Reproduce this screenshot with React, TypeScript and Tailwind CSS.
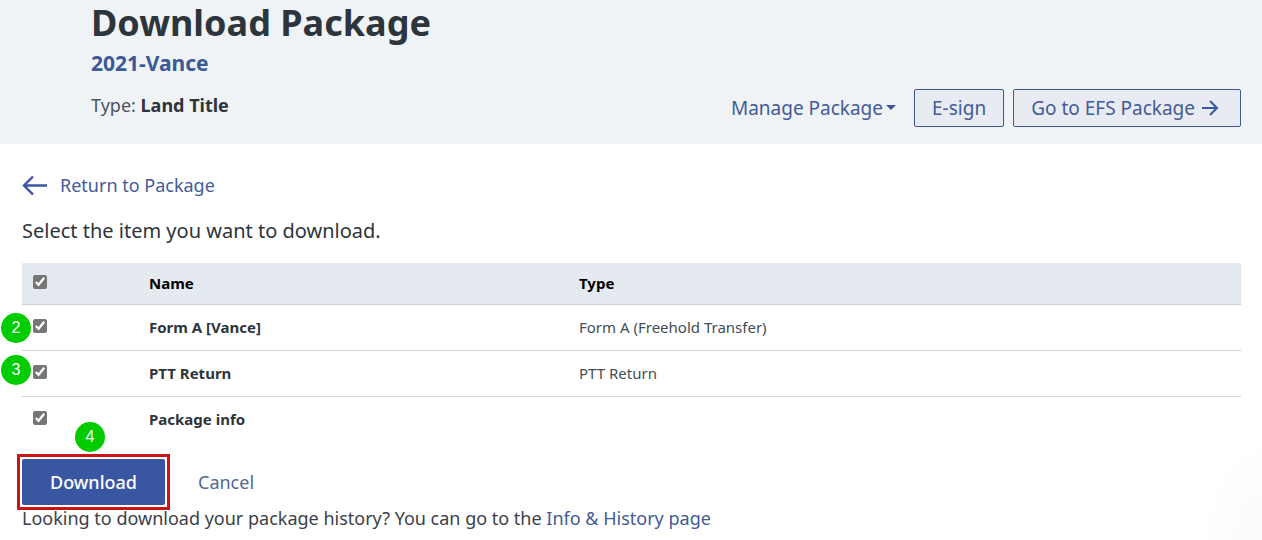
import { useState } from "react";

type Item = { id: string; name: string; type: string; step?: number; badge?: string };

const items: Item[] = [
  { id: "form-a", name: "Form A [Vance]", type: "Form A (Freehold Transfer)", step: 2, badge: "top-2 -left-[21px]" },
  { id: "ptt", name: "PTT Return", type: "PTT Return", step: 3, badge: "top-1 -left-[21px]" },
  { id: "info", name: "Package info", type: "" },
];

function StepBadge({ step, className }: { step: number; className?: string }) {
  return (
    <span
      className={`absolute flex size-[30px] items-center justify-center rounded-full bg-[#00cc00] font-['Liberation_Sans',sans-serif] text-base font-normal text-white ${className ?? ""}`}
    >
      {step}
    </span>
  );
}

export default function App() {
  const [selected, setSelected] = useState<string[]>(items.map((i) => i.id));
  const allSelected = selected.length === items.length;

  const toggle = (id: string) =>
    setSelected((s) => (s.includes(id) ? s.filter((x) => x !== id) : [...s, id]));

  return (
    <div className="min-h-screen bg-white bg-[radial-gradient(60px_100px_at_100%_100%,#fafafc,#ffffff)] font-['Noto_Sans',sans-serif] text-[#2d353c]">
      <header className="flex items-end justify-between bg-[#f0f3f6] pr-[21px] pb-[17px] pl-[91px]">
        <div className="pb-2">
          <h1 className="text-4xl leading-[46px] font-bold">Download Package</h1>
          <p className="text-[21px] leading-[34px] font-bold text-[#3b5998]">2021-Vance</p>
          <p className="mt-3 text-lg leading-[27px] text-[#4a545c]">
            Type: <strong className="font-bold text-[#2d353c]">Land Title</strong>
          </p>
        </div>
        <div className="flex items-center text-[19px] text-[#435b96]">
          <button type="button" className="mr-[18px] flex items-center gap-[3px]">
            Manage Package
            <svg className="w-[10px]" viewBox="0 0 10 7" aria-hidden="true">
              <path d="M0 0h10L5 5z" fill="#3a579f" />
            </svg>
          </button>
          <button
            type="button"
            className="mr-[9px] h-[38px] rounded-xs border border-[#3f5795] bg-[#e8ebf2] px-[17px]"
          >
            E-sign
          </button>
          <button
            type="button"
            className="flex h-[38px] items-center gap-1.5 rounded-xs border border-[#3f5795] bg-[#e8ebf2] pr-[21px] pl-[17px]"
          >
            Go to EFS Package
            <svg className="w-[18px]" viewBox="0 0 18 18" fill="none" stroke="#3a579f" strokeWidth="2" aria-hidden="true">
              <path d="M1 9h15M9 2l7 7-7 7" />
            </svg>
          </button>
        </div>
      </header>

      <main className="pt-[27px] pr-[21px] pl-[22px]">
        <a href="#package" className="inline-flex items-center gap-3 text-lg text-[#435b96]">
          <svg className="w-[26px]" viewBox="0 0 26 20" fill="none" stroke="#3a579f" strokeWidth="2.4" aria-hidden="true">
            <path d="M25 10.5H2M11 1.5l-9 9 9 9" />
          </svg>
          Return to Package
        </a>
        <p className="mt-[15px] text-xl leading-[30px]">Select the item you want to download.</p>

        <table className="mt-[17px] w-full table-fixed text-[15px]">
          <thead>
            <tr className="h-[41px] border-b border-[#cfd3d8] bg-[#e5e9f0] text-left text-black">
              <th className="w-[127px] pb-[3px] pl-[11px]">
                <input
                  type="checkbox"
                  aria-label="Select all items"
                  className="block size-3.5 accent-[#767676]"
                  checked={allSelected}
                  onChange={() => setSelected(allSelected ? [] : items.map((i) => i.id))}
                />
              </th>
              <th className="w-[430px]">Name</th>
              <th>Type</th>
            </tr>
          </thead>
          <tbody>
            {items.map((item) => (
              <tr key={item.id} className="h-[46px] border-b border-[#cfd3d8] last:border-b-0">
                <td className="relative pb-[3px] pl-[11px]">
                  {item.step && <StepBadge step={item.step} className={item.badge} />}
                  <input
                    id={item.id}
                    type="checkbox"
                    className="block size-3.5 accent-[#767676]"
                    checked={selected.includes(item.id)}
                    onChange={() => toggle(item.id)}
                  />
                </td>
                <td>
                  <label htmlFor={item.id} className="font-bold">
                    {item.name}
                  </label>
                </td>
                <td className="text-[#444d55]">{item.type}</td>
              </tr>
            ))}
          </tbody>
        </table>

        <div className="relative mt-3 -ml-[5px] flex items-center gap-7">
          <StepBadge step={4} className="-top-8 left-[58px]" />
          <div className="border-3 border-[#cc1417] p-0.5">
            <button
              type="button"
              className="h-[46px] w-[143px] rounded-xs bg-[#3956a3] text-lg font-medium text-white"
            >
              Download
            </button>
          </div>
          <button type="button" className="text-lg text-[#536791]">
            Cancel
          </button>
        </div>
        <p className="text-lg leading-4 text-[#3a4249]">
          Looking to download your package history? You can go to the{" "}
          <a href="#history" className="text-[#435b96]">
            Info &amp; History page
          </a>
        </p>
      </main>
    </div>
  );
}
